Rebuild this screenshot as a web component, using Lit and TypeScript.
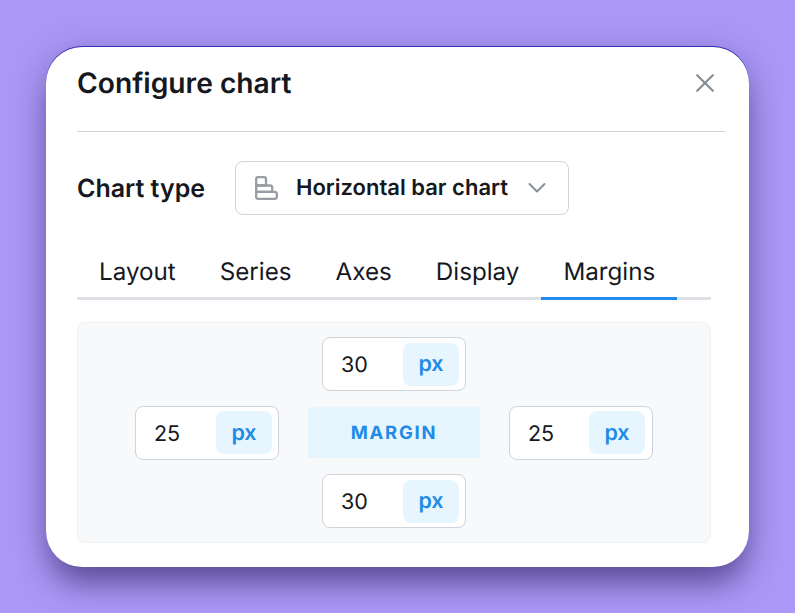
import { LitElement, html, css } from "lit";
import { customElement } from "lit/decorators.js";

@customElement("app-root")
export class AppRoot extends LitElement {
  static styles = css`
    :host {
      display: block;
      width: 795px;
      height: 613px;
      box-sizing: border-box;
      padding: 47px 46px 46px;
      background: #ab98f6;
      font-family: Inter, "Liberation Sans", sans-serif;
      color: #15181e;
      overflow: hidden;
      text-rendering: geometricPrecision;
    }
    .card {
      box-sizing: border-box;
      width: 703px;
      height: 520px;
      background: #fff;
      border-radius: 36px;
      padding: 0 24px 24px 31px;
      box-shadow: 0 -1px 0 0 #2f2fb0, 0 22px 30px -6px rgba(50, 35, 100, 0.55), 0 6px 34px rgba(50, 35, 100, 0.28);
      display: flex;
      flex-direction: column;
    }
    .head {
      height: 85px;
      box-sizing: border-box;
      border-bottom: 1px solid #ced4da;
      display: flex;
      justify-content: space-between;
      align-items: flex-start;
    }
    h1 {
      margin: 20px 0 0;
      font-size: 28.2px;
      line-height: 33px;
      font-weight: 600;
    }
    .close {
      margin: 27px 11px 0 0;
      width: 18px;
      height: 18px;
      display: block;
    }
    .type {
      display: flex;
      align-items: center;
      margin-top: 29px;
      gap: 30px;
    }
    .type-label {
      font-size: 25px;
      line-height: 30px;
      font-weight: 600;
      padding-top: 2px;
    }
    .select {
      box-sizing: border-box;
      width: 334px;
      height: 54px;
      border: 1px solid #ced4da;
      border-radius: 8px;
      display: flex;
      align-items: center;
      padding: 0 22px 0 19px;
      font-size: 22px;
      font-weight: 600;
    }
    .select .ic { width: 23px; height: 24px; display: block; margin-right: 18px; }
    .select .txt { flex: 1; }
    .select .chev { width: 18px; height: 18px; display: block; }
    .tabs {
      display: flex;
      width: 634px;
      margin-top: 29px;
      border-bottom: 3px solid #dee2e6;
      box-sizing: border-box;
      height: 56px;
    }
    .tab {
      padding: 0 22px;
      font-size: 24.2px;
      line-height: 55px;
      height: 56px;
      box-sizing: border-box;
    }
    .tab.on { border-bottom: 3px solid #1f8bee; }
    .panel {
      box-sizing: border-box;
      width: 634px;
      height: 221px;
      margin-top: 22px;
      background: #f7f9fb;
      border: 1px solid #eff1f3;
      border-radius: 8px;
      display: grid;
      grid-template-columns: 144px 172px 144px;
      grid-template-rows: repeat(3, 54px);
      column-gap: 29px;
      row-gap: 14.5px;
      justify-content: center;
      align-content: center;
      align-items: center;
    }
    .inp {
      box-sizing: border-box;
      width: 144px;
      height: 54px;
      background: #fff;
      border: 1px solid #ced4da;
      border-radius: 8px;
      display: flex;
      align-items: center;
      justify-content: space-between;
      padding: 0 6px 0 18px;
      font-size: 21.5px;
    }
    .val { padding-top: 2px; }
    .px {
      width: 56px;
      height: 43px;
      border-radius: 8px;
      background: #e7f5ff;
      color: #228be6;
      font-size: 21.5px;
      font-weight: 600;
      display: flex;
      align-items: center;
      justify-content: center;
    }
    .top { grid-column: 2; grid-row: 1; justify-self: center; }
    .left { grid-column: 1; grid-row: 2; }
    .mid {
      grid-column: 2;
      grid-row: 2;
      height: 51px;
      background: #e7f5ff;
      color: #228be6;
      font-size: 18.4px;
      font-weight: 650;
      letter-spacing: 1.8px;
      display: flex;
      align-items: center;
      justify-content: center;
      border-radius: 2px;
    }
    .right { grid-column: 3; grid-row: 2; padding-right: 7px; }
    .bottom { grid-column: 2; grid-row: 3; justify-self: center; }
  `;

  private field(cls: string, v: string) {
    return html`<div class="inp ${cls}"><span class="val">${v}</span><span class="px">px</span></div>`;
  }

  render() {
    return html`<div class="card">
      <div class="head">
        <h1>Configure chart</h1>
        <svg class="close" viewBox="0 0 18 18" fill="none" stroke="#868e96" stroke-width="2.2" stroke-linecap="round">
          <path d="M1.2 1.2 L16.8 16.8 M16.8 1.2 L1.2 16.8" />
        </svg>
      </div>
      <div class="type">
        <span class="type-label">Chart type</span>
        <div class="select">
          <svg class="ic" viewBox="0 0 23 24" fill="none" stroke="#979da3" stroke-width="2.3" stroke-linejoin="round">
            <path d="M1.2 3 a1.8 1.8 0 0 1 1.8-1.8 h6 a2 2 0 0 1 2 2 v6.3 H1.2 z" />
            <path d="M1.2 9.5 h14 a2 2 0 0 1 2 2 v4.3 H1.2 z" />
            <path d="M1.2 15.8 h18.6 a2 2 0 0 1 2 2 v3 a2 2 0 0 1-2 2 H3 a1.8 1.8 0 0 1-1.8-1.8 z" />
          </svg>
          <span class="txt">Horizontal bar chart</span>
          <svg class="chev" viewBox="0 0 18 18" fill="none" stroke="#868e96" stroke-width="2" stroke-linecap="round" stroke-linejoin="round">
            <path d="M1.5 5 L9 12.5 L16.5 5" />
          </svg>
        </div>
      </div>
      <div class="tabs">
        <div class="tab">Layout</div>
        <div class="tab">Series</div>
        <div class="tab">Axes</div>
        <div class="tab">Display</div>
        <div class="tab on">Margins</div>
      </div>
      <div class="panel">
        ${this.field("top", "30")}
        ${this.field("left", "25")}
        <div class="mid">MARGIN</div>
        ${this.field("right", "25")}
        ${this.field("bottom", "30")}
      </div>
    </div>`;
  }
}
